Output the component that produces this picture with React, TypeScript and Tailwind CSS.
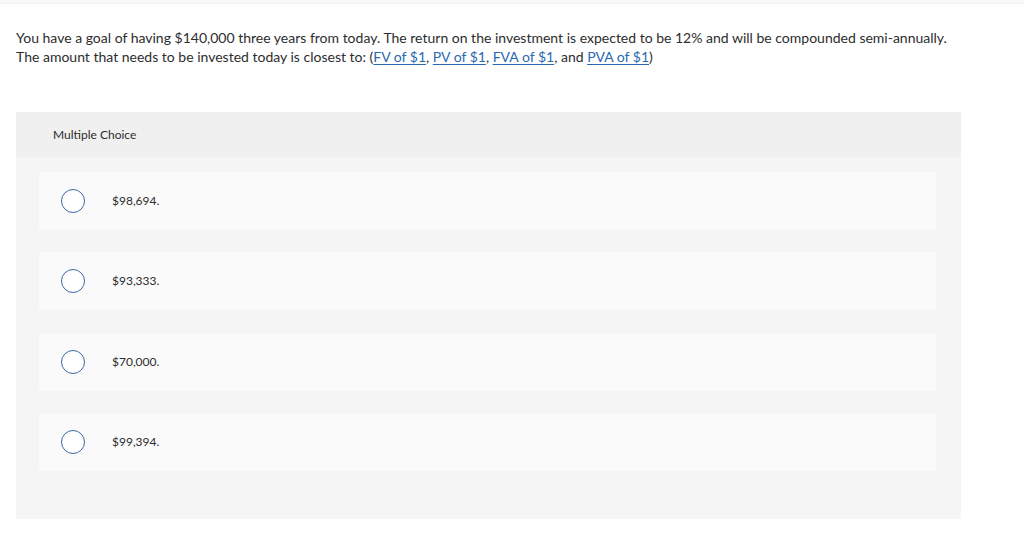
import React from "react";

const options = ["$98,694.", "$93,333.", "$70,000.", "$99,394."];

function Link({ children }: { children: React.ReactNode }) {
  return <a href="#" className="text-[#2b68b0] underline underline-offset-2">{children}</a>;
}

export default function App() {
  return (
    <div className="w-[1024px] h-[546px] bg-white text-[#2d2d2d]" style={{ fontFamily: "Lato, 'Open Sans', sans-serif" }}>
      <div className="h-[4px] bg-[#f8f8f8] border-b border-[#f2f2f2]" />
      <div className="pl-4 pt-[24px] text-[14px] leading-[19px]">
        <p>You have a goal of having $140,000 three years from today. The return on the investment is expected to be 12% and will be compounded semi-annually.</p>
        <p>
          The amount that needs to be invested today is closest to: (<Link>FV of $1</Link>, <Link>PV of $1</Link>, <Link>FVA of $1</Link>, and <Link>PVA of $1</Link>)
        </p>
      </div>
      <div className="ml-4 mt-[46px] w-[945px] h-[407px] bg-[#f5f5f5] rounded-[2px] flex flex-col">
        <div className="h-[45px] bg-[#f0f0f0] flex items-center pl-[37px] text-[12px]">Multiple Choice</div>
        <div className="flex flex-col gap-[22.5px] pt-[14.5px] pl-[23px] pr-[25px]">
          {options.map((o) => (
            <div key={o} className="h-[58px] bg-[#fafafa] rounded-[3px] flex items-center pl-[22px]">
              <span className="w-[24px] h-[24px] rounded-full border border-[#3d68a3] bg-white" />
              <span className="ml-[27px] text-[12px]">{o}</span>
            </div>
          ))}
        </div>
      </div>
    </div>
  );
}
